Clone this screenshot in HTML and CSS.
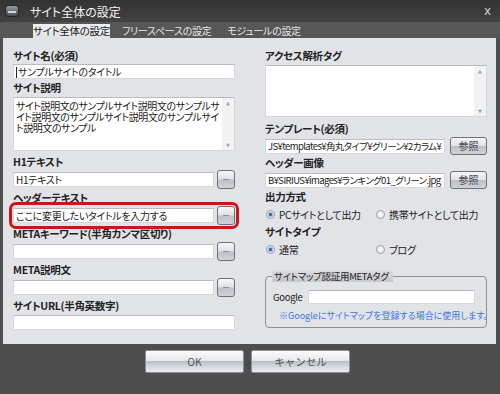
FILE: index.html
```html
<!DOCTYPE html>
<html lang="ja">
<head>
  <meta charset="UTF-8" />
  <title>サイト全体の設定</title>
  <link rel="stylesheet" href="styles.css">
</head>
<body>
  <div class="window">
    <div class="titlebar">
      <svg class="app-icon" width="14" height="12" viewBox="0 0 14 12">
        <defs>
          <linearGradient id="ig" x1="0" y1="0" x2="0" y2="1">
            <stop offset="0" stop-color="#9a9da3"/>
            <stop offset="1" stop-color="#44474d"/>
          </linearGradient>
        </defs>
        <rect x="0.5" y="0.5" width="13" height="11" rx="3" fill="url(#ig)" stroke="#222"/>
        <rect x="3" y="6" width="8" height="2" fill="#c9d4e4"/>
      </svg>
      <span class="title">サイト全体の設定</span>
      <span class="close">x</span>
    </div>

    <div class="tabs">
      <span class="tab active">サイト全体の設定</span>
      <span class="tab">フリースペースの設定</span>
      <span class="tab">モジュールの設定</span>
    </div>

    <div class="panel">
      <div class="col">
        <div class="label first">サイト名(必須)</div>
        <div class="input"><span class="caret"></span>サンプルサイトのタイトル</div>

        <div class="label">サイト説明</div>
        <div class="textbox tall">
          <div class="textbox-text">
            <div class="line">サイト説明文のサンプルサイト説明文のサンプルサ</div>
            <div class="line">イト説明文のサンプルサイト説明文のサンプルサイ</div>
            <div class="line">ト説明文のサンプル</div>
          </div>
          <div class="scroll"><span>▲</span><span>▼</span></div>
        </div>

        <div class="label gap4">H1テキスト</div>
        <div class="row">
          <div class="input">H1テキスト</div>
          <button class="dots"></button>
        </div>

        <div class="label">ヘッダーテキスト</div>
        <div class="row highlight">
          <div class="input">ここに変更したいタイトルを入力する</div>
          <button class="dots"></button>
        </div>

        <div class="label">METAキーワード(半角カンマ区切り)</div>
        <div class="row">
          <div class="input"></div>
          <button class="dots"></button>
        </div>

        <div class="label">META説明文</div>
        <div class="row">
          <div class="input"></div>
          <button class="dots"></button>
        </div>

        <div class="label">サイトURL(半角英数字)</div>
        <div class="input gap2"></div>
      </div>

      <div class="col">
        <div class="label first">アクセス解析タグ</div>
        <div class="textbox">
          <div class="textbox-text"></div>
          <div class="scroll"><span>▲</span><span>▼</span></div>
        </div>

        <div class="label gap5">テンプレート(必須)</div>
        <div class="row browse">
          <div class="input">JS¥templates¥角丸タイプ¥グリーン¥2カラム¥</div>
          <button class="ref">参照</button>
        </div>

        <div class="label gap1">ヘッダー画像</div>
        <div class="row browse">
          <div class="input">B¥SIRIUS¥images¥ランキング01_グリーン.jpg</div>
          <button class="ref">参照</button>
        </div>

        <div class="label gap1">出力方式</div>
        <div class="radios">
          <span class="opt"><span class="radio on"></span>PCサイトとして出力</span>
          <span class="opt"><span class="radio"></span>携帯サイトとして出力</span>
        </div>

        <div class="label gap4">サイトタイプ</div>
        <div class="radios">
          <span class="opt"><span class="radio on"></span>通常</span>
          <span class="opt"><span class="radio"></span>ブログ</span>
        </div>

        <fieldset class="group">
          <legend>サイトマップ認証用METAタグ</legend>
          <div class="gs-row">
            <span class="gs-label">Google</span>
            <div class="input"></div>
          </div>
          <div class="note">※Googleにサイトマップを登録する場合に使用します。</div>
        </fieldset>
      </div>
    </div>

    <div class="actions">
      <button class="btn">OK</button>
      <button class="btn">キャンセル</button>
    </div>
  </div>
</body>
</html>
```

FILE: styles.css
```css
body {
  margin: 0;
  font-family: "Noto Sans CJK JP", "Noto Sans", sans-serif;
  font-feature-settings: "palt";
}

.window {
  width: 500px;
  height: 394px;
  background: #4e4e4e;
  overflow: hidden;
}

.titlebar {
  height: 22px;
  display: flex;
  align-items: center;
  padding: 0 9px 0 5px;
  background: linear-gradient(#333, #424242);
}

.app-icon {
  margin-right: 11px;
}

.title {
  color: #f2f2f2;
  font-size: 12px;
}

.close {
  margin-left: auto;
  color: #d0d0d0;
  font-size: 12px;
  font-family: "DejaVu Sans", sans-serif;
}

.tabs {
  height: 16px;
  display: flex;
  align-items: flex-end;
  padding-left: 33px;
  background: #575757;
}

.tab {
  height: 14px;
  line-height: 14px;
  font-size: 10px;
  letter-spacing: -0.3px;
  color: #e6e6e6;
  padding: 0 8px;
  white-space: nowrap;
}

.tab.active {
  width: 77px;
  padding: 0;
  margin-right: 4px;
  text-align: center;
  font-size: 10.5px;
  color: #222;
  background: linear-gradient(#eef0f3, #e1e3e7);
}

.panel {
  height: 306px;
  margin: 0 4px 0 3px;
  box-sizing: border-box;
  padding: 11px 9px 0 10px;
  background: #e1e3e7;
  display: grid;
  grid-template-columns: 222px 222px;
  column-gap: 30px;
  align-items: start;
}

.col {
  display: flex;
  flex-direction: column;
  min-width: 0;
}

.label {
  font-size: 10.5px;
  font-weight: bold;
  letter-spacing: -0.3px;
  line-height: 14px;
  height: 14px;
  color: #222;
  margin-top: 2px;
  white-space: nowrap;
}

.label.first { margin-top: 0; }
.label.gap1 { margin-top: 1px; }
.label.gap4 { margin-top: 4px; }
.label.gap5 { margin-top: 5px; }

.input {
  height: 15px;
  box-sizing: border-box;
  min-width: 0;
  margin-top: 1px;
  padding: 0 2px;
  background: #fff;
  border: 1px solid #d6d8dc;
  border-top-color: #b9bbc0;
  font-size: 10px;
  letter-spacing: -0.3px;
  line-height: 13px;
  color: #222;
  white-space: nowrap;
  overflow: hidden;
}

.input.gap2 { margin-top: 2px; }

.caret {
  display: inline-block;
  width: 1px;
  height: 11px;
  background: #222;
  vertical-align: -2px;
  margin-right: 1px;
}

.textbox {
  height: 52px;
  margin-top: 2px;
  display: flex;
  background: #fff;
  border: 1px solid #d6d8dc;
  border-top-color: #b9bbc0;
  box-sizing: border-box;
}

.textbox.tall { height: 54px; }

.textbox-text {
  flex: 1;
  min-width: 0;
  padding: 2px 2px 0;
  font-size: 10px;
  letter-spacing: -0.45px;
  color: #222;
  white-space: nowrap;
  overflow: hidden;
}

.textbox-text .line {
  height: 11px;
  line-height: 11px;
}

.scroll {
  width: 12px;
  flex: none;
  background: #f2f2f3;
  display: flex;
  flex-direction: column;
  justify-content: space-between;
  align-items: center;
  padding: 2px 0;
  font-size: 5px;
  color: #a0a3a8;
  font-family: "DejaVu Sans", sans-serif;
}

.row {
  height: 19px;
  margin-top: 1px;
  display: flex;
  align-items: center;
  gap: 3px;
}

.row .input {
  flex: 1;
  margin-top: 0;
}

.row.highlight {
  outline: 3px solid #d0121b;
  outline-offset: 1px;
  border-radius: 3px;
}

.dots {
  flex: none;
  width: 18px;
  height: 19px;
  padding: 0;
  border: 1px solid #6d7076;
  border-radius: 3px;
  background: linear-gradient(#f5f6f8, #dfe1e5 48%, #bcc0c7 52%, #cfd2d7);
  display: flex;
  align-items: center;
  justify-content: center;
}

.dots::after {
  content: "";
  width: 6px;
  height: 1px;
  background: #8a8d93;
}

.row.browse {
  height: 18px;
  gap: 5px;
}

.row.browse .input {
  font-size: 9.5px;
  letter-spacing: -0.6px;
}

.ref {
  flex: none;
  width: 37px;
  height: 18px;
  padding: 0;
  border: 1px solid #6d7076;
  border-radius: 3px;
  background: linear-gradient(#f5f6f8, #dfe1e5 48%, #bcc0c7 52%, #cfd2d7);
  font-family: inherit;
  font-size: 10px;
  line-height: 16px;
  color: #444;
}

.radios {
  height: 14px;
  margin-top: 3px;
  display: grid;
  grid-template-columns: 110px 1fr;
  padding-left: 1px;
}

.opt {
  display: flex;
  align-items: center;
  gap: 3px;
  font-size: 10px;
  letter-spacing: -0.3px;
  color: #222;
  white-space: nowrap;
}

.radio {
  width: 9px;
  height: 9px;
  box-sizing: border-box;
  border-radius: 50%;
  border: 1px solid #9b9ea4;
  background: radial-gradient(#fff, #dadce0);
  display: flex;
  align-items: center;
  justify-content: center;
  margin-right: 1px;
}

.radio.on::after {
  content: "";
  width: 3px;
  height: 3px;
  border-radius: 50%;
  background: #1f5fb8;
  box-shadow: 0 0 0 1px #8fb6e6;
}

.group {
  margin: 14px 0 0;
  padding: 0 11px 5px 7px;
  border: 1px solid #8e9096;
  border-radius: 4px;
  min-width: 0;
}

.group legend {
  margin-left: -1px;
  padding: 0 4px 0 2px;
  height: 12px;
  line-height: 12px;
  font-size: 9.5px;
  letter-spacing: -0.3px;
  color: #222;
  background: linear-gradient(#dcdde1, #c6c8cc);
  border-radius: 2px 2px 0 0;
}

.gs-row {
  margin-top: 8px;
  display: flex;
  align-items: center;
}

.gs-label {
  width: 35px;
  flex: none;
  font-size: 9.5px;
  letter-spacing: -0.3px;
  color: #222;
}

.gs-row .input {
  flex: 1;
  height: 14px;
  margin-top: 0;
}

.note {
  margin-top: 6px;
  padding-left: 6px;
  font-size: 9px;
  line-height: 12px;
  color: #3f77db;
  white-space: nowrap;
}

.actions {
  display: flex;
  justify-content: center;
  gap: 7px;
  padding: 6px 5px 0 0;
}

.btn {
  width: 99px;
  height: 23px;
  padding: 0;
  border: 1px solid #8d9097;
  border-radius: 2px;
  background: linear-gradient(#fbfbfc, #e8e9ec 45%, #babec6 50%, #d3d6db 72%, #e9ebee);
  font-family: inherit;
  font-size: 10.5px;
  color: #555;
}
```
